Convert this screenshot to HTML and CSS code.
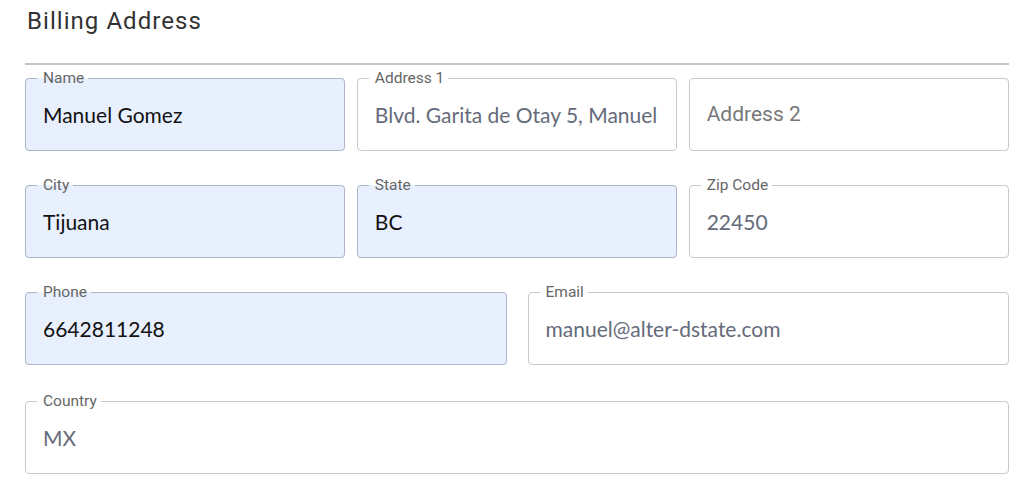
FILE: index.html
```html
<!DOCTYPE html>
<html lang="en">
<head>
<meta charset="utf-8">
<title>Billing Address</title>
<link rel="stylesheet" href="styles.css">
</head>
<body>
<div class="page">
  <h2 class="title">Billing Address</h2>
  <hr class="divider">
  <div class="row row-3">
    <fieldset class="field filled"><legend>Name</legend><div class="value">Manuel Gomez</div></fieldset>
    <fieldset class="field"><legend>Address 1</legend><div class="value">Blvd. Garita de Otay 5, Manuel</div></fieldset>
    <fieldset class="field plain"><div class="value placeholder">Address 2</div></fieldset>
  </div>
  <div class="row row-3">
    <fieldset class="field filled"><legend>City</legend><div class="value">Tijuana</div></fieldset>
    <fieldset class="field filled"><legend>State</legend><div class="value">BC</div></fieldset>
    <fieldset class="field"><legend>Zip Code</legend><div class="value">22450</div></fieldset>
  </div>
  <div class="row row-2">
    <fieldset class="field filled"><legend>Phone</legend><div class="value">6642811248</div></fieldset>
    <fieldset class="field"><legend>Email</legend><div class="value">manuel@alter-dstate.com</div></fieldset>
  </div>
  <div class="row row-1">
    <fieldset class="field"><legend>Country</legend><div class="value">MX</div></fieldset>
  </div>
</div>
</body>
</html>
```
FILE: styles.css
```css
html, body {
  margin: 0;
  padding: 0;
  background: #ffffff;
}

.page {
  width: 984px;
  margin-left: 25px;
  padding-top: 7px;
  font-family: Roboto, "Liberation Sans", sans-serif;
}

.title {
  margin: 0 0 0 2px;
  font-size: 24px;
  font-weight: 400;
  line-height: 28px;
  letter-spacing: 1.05px;
  color: #333333;
}

.divider {
  margin: 28px 0 0 0;
  border: 0;
  border-top: 2px solid #c4c4c4;
  height: 0;
}

.row {
  display: grid;
  margin-top: 26px;
}

.divider + .row {
  margin-top: 5px;
}

.row-3 {
  grid-template-columns: repeat(3, 1fr);
  column-gap: 11.5px;
}

.row-2 {
  grid-template-columns: repeat(2, 1fr);
  column-gap: 21px;
}

.row-1 {
  grid-template-columns: 1fr;
  margin-top: 28px;
}

.field {
  margin: 0;
  min-width: 0;
  padding: 0 17px;
  border: 1px solid #c8c8c8;
  border-radius: 4px;
  background: #ffffff;
  align-self: start;
}

.field.filled {
  background: #e8f0fe;
  border-color: #adb6c6;
}

.field legend {
  margin-left: -6px;
  padding: 0 4px 0 6px;
  font-family: Roboto, "Liberation Sans", sans-serif;
  font-size: 15.5px;
  line-height: 16px;
  color: #666666;
}

.field.plain {
  margin-top: 8px;
}

.value {
  height: 26px;
  padding: 16px 0 22px 0;
  font-family: Lato, "Liberation Sans", sans-serif;
  font-size: 21px;
  line-height: 26px;
  color: #656b7b;
  white-space: nowrap;
  overflow: hidden;
}

.filled .value {
  color: #111111;
}

.plain .value {
  padding-top: 22px;
  padding-bottom: 23px;
}

.value.placeholder {
  font-family: Roboto, "Liberation Sans", sans-serif;
  color: #777777;
}
```
